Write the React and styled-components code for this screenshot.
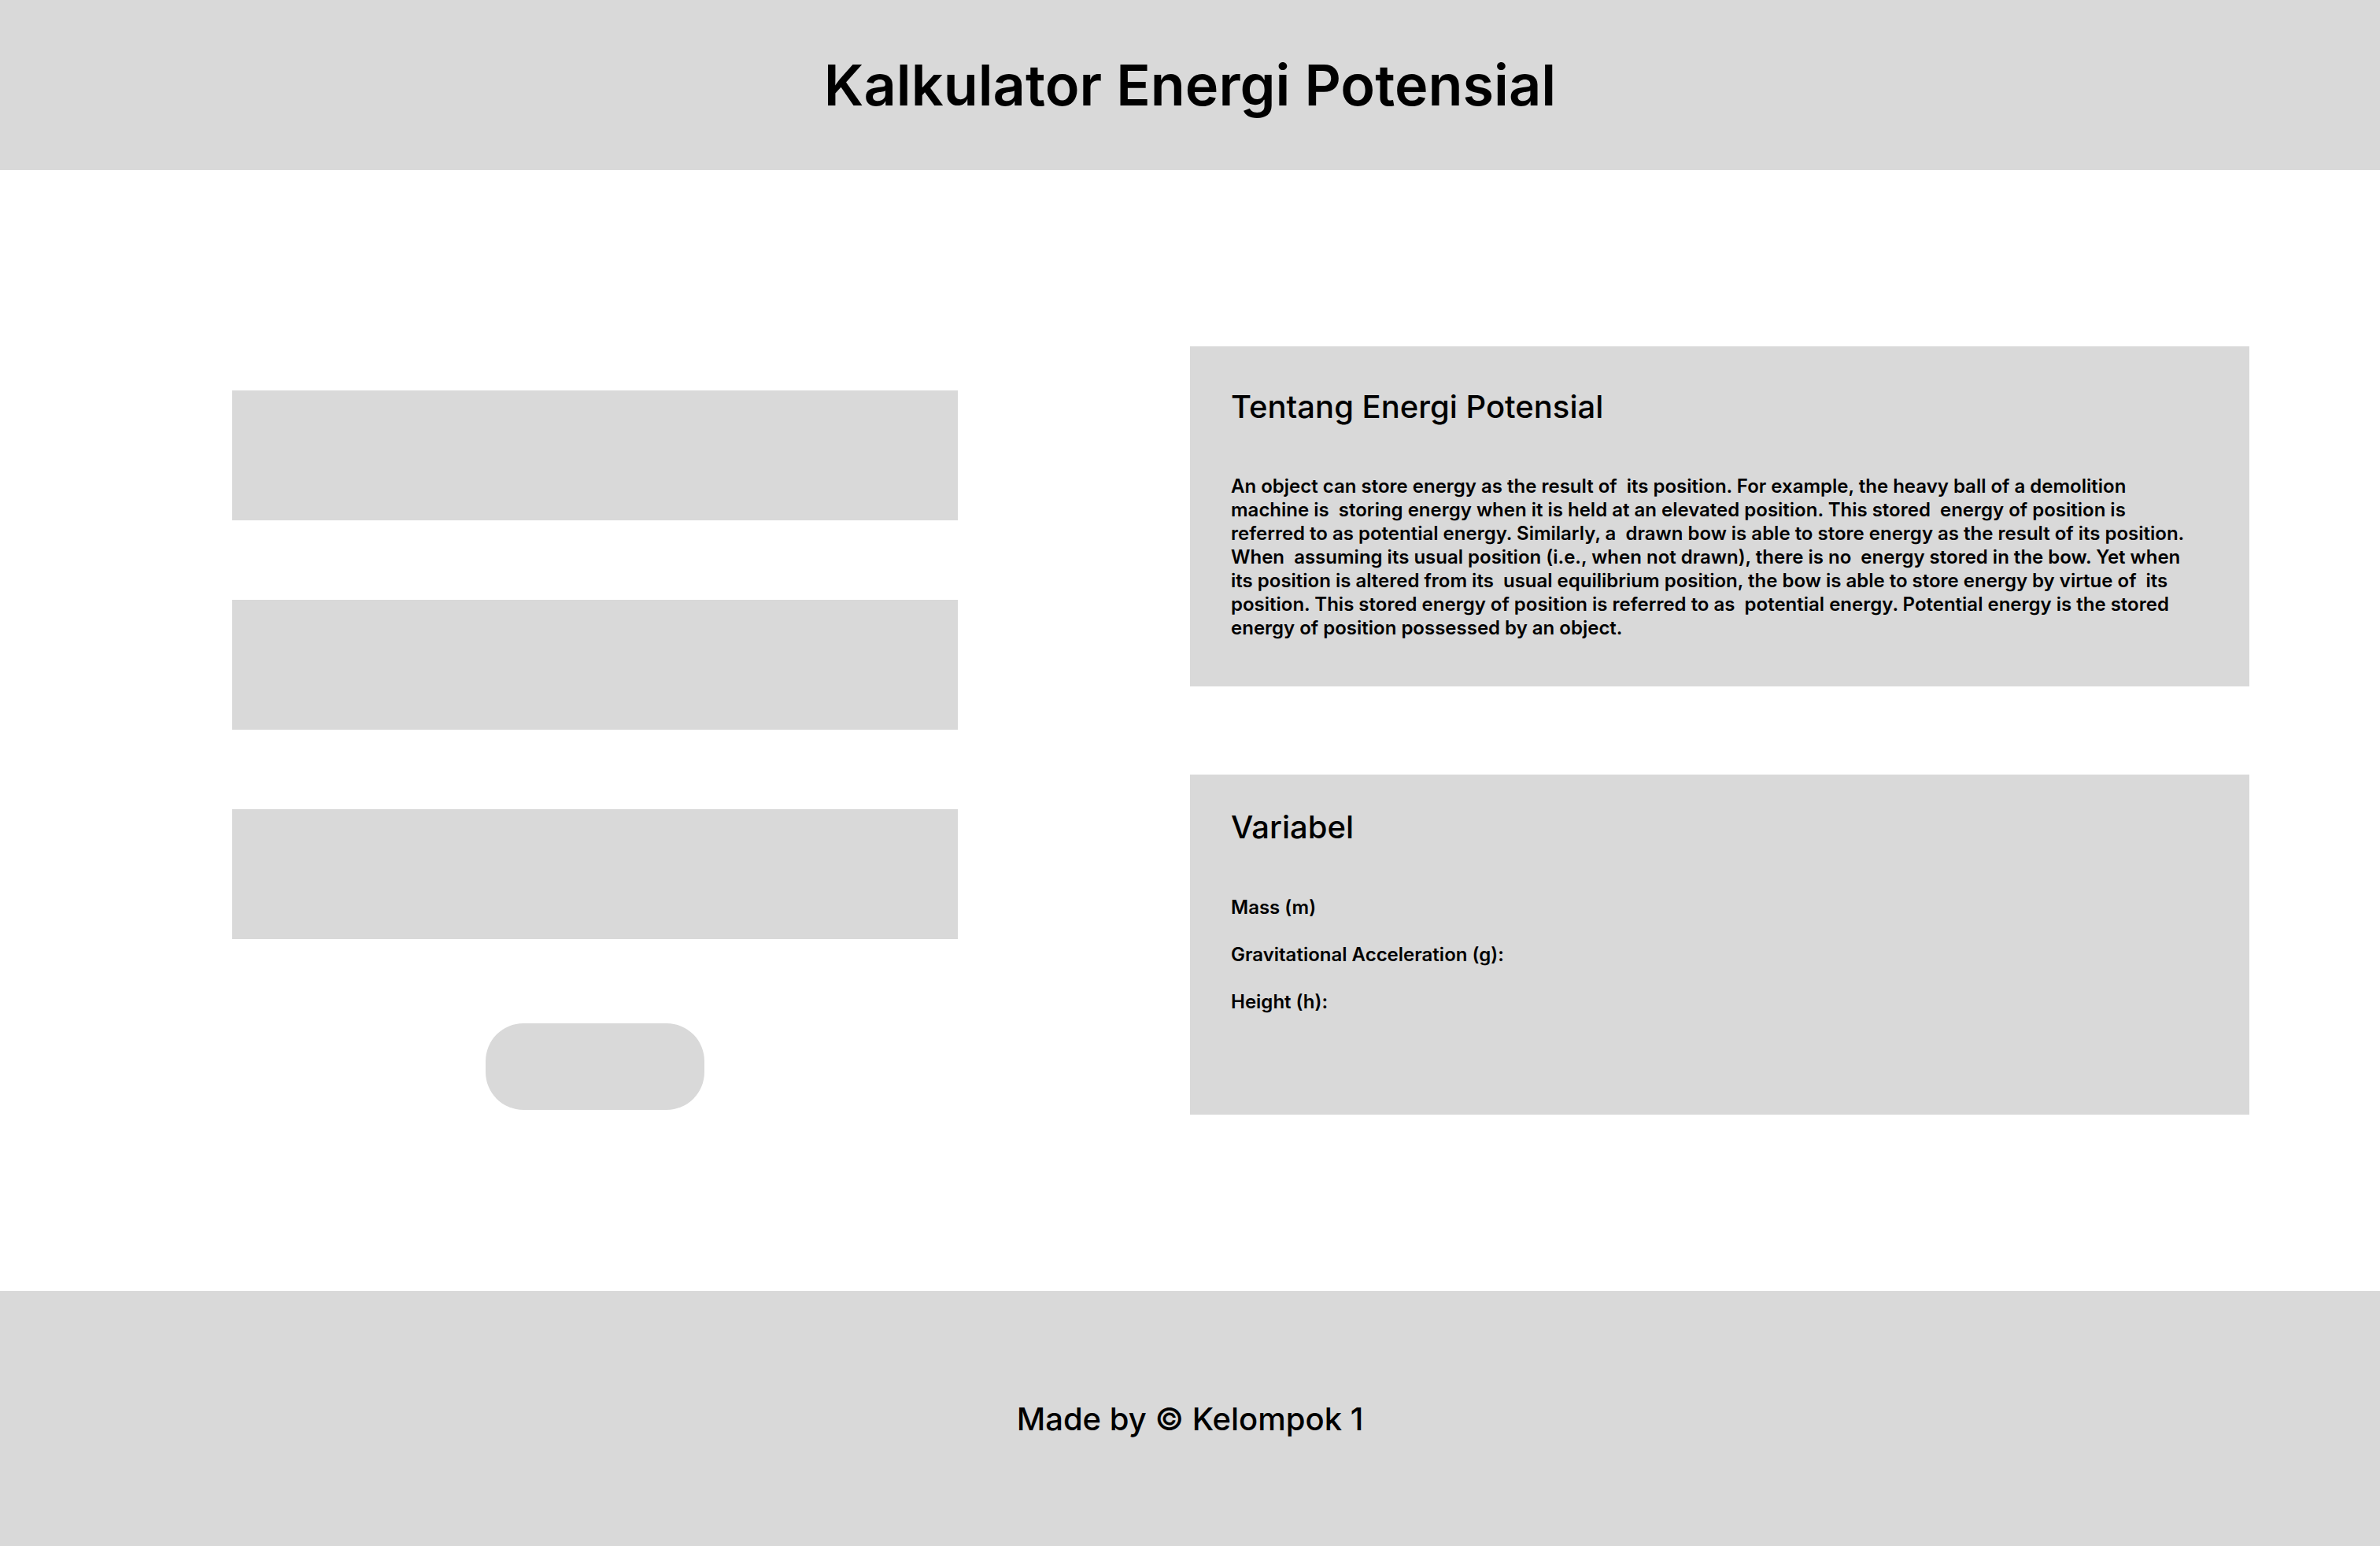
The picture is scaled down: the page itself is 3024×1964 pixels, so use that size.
import React from "react";
import styled, { createGlobalStyle } from "styled-components";

const GlobalStyle = createGlobalStyle`
  * {
    box-sizing: border-box;
  }

  body {
    margin: 0;
    background: #ffffff;
    color: #000000;
    font-family: Inter, "Noto Sans", sans-serif;
  }
`;

const Header = styled.header`
  height: 216px;
  background-color: #d9d9d9;
  display: flex;
  align-items: center;
  justify-content: center;

  h1 {
    margin: 0;
    font-size: 72px;
    font-weight: 600;
    line-height: 1.2;
  }
`;

const Main = styled.main`
  height: 1424px;
  display: grid;
  grid-template-columns: 1fr 1fr;
`;

const Form = styled.section`
  display: flex;
  flex-direction: column;
  align-items: center;
  gap: 101px;
  padding-top: 280px;
`;

const Field = styled.input`
  width: 922px;
  height: 165px;
  border: none;
  outline: none;
  background-color: #d9d9d9;
  font-family: inherit;
  font-size: 32px;
  padding: 0 32px;
`;

const Button = styled.button`
  width: 278px;
  height: 110px;
  margin-top: 6px;
  border: none;
  border-radius: 48px;
  background-color: #d9d9d9;
  cursor: pointer;
`;

const Aside = styled.section`
  display: flex;
  flex-direction: column;
  gap: 112px;
  padding-top: 224px;
`;

const Card = styled.article`
  width: 1346px;
  height: 432px;
  background-color: #d9d9d9;
  padding: ${({ $top }) => $top}px 52px 0;

  h2 {
    margin: 0;
    font-size: 40px;
    font-weight: 500;
    line-height: 48px;
  }
`;

const Paragraph = styled.p`
  margin: 62px 0 0;
  font-size: 24px;
  font-weight: 600;
  line-height: 30px;
  white-space: pre-wrap;
`;

const VarList = styled.ul`
  list-style: none;
  margin: 63px 0 0;
  padding: 0;
  display: flex;
  flex-direction: column;
  gap: 30px;

  li {
    font-size: 24px;
    font-weight: 600;
    line-height: 30px;
  }
`;

const Footer = styled.footer`
  height: 324px;
  background-color: #d9d9d9;
  display: flex;
  align-items: center;
  justify-content: center;

  p {
    margin: 0;
    font-size: 40px;
    font-weight: 500;
  }
`;

const about = [
  "An object can store energy as the result of  its position. For example, the heavy ball of a demolition",
  "machine is  storing energy when it is held at an elevated position. This stored  energy of position is",
  "referred to as potential energy. Similarly, a  drawn bow is able to store energy as the result of its position.",
  "When  assuming its usual position (i.e., when not drawn), there is no  energy stored in the bow. Yet when",
  "its position is altered from its  usual equilibrium position, the bow is able to store energy by virtue of  its",
  "position. This stored energy of position is referred to as  potential energy. Potential energy is the stored",
  "energy of position possessed by an object.",
].join("\n");

const variables = [
  "Mass (m)",
  "Gravitational Acceleration (g):",
  "Height (h):",
];

const App = () => {
  return (
    <>
      <GlobalStyle />
      <Header>
        <h1>Kalkulator Energi Potensial</h1>
      </Header>

      <Main>
        <Form>
          <Field type="number" aria-label="Mass" />
          <Field type="number" aria-label="Gravitational acceleration" />
          <Field type="number" aria-label="Height" />
          <Button type="button" aria-label="Hitung" />
        </Form>

        <Aside>
          <Card $top={53}>
            <h2>Tentang Energi Potensial</h2>
            <Paragraph>{about}</Paragraph>
          </Card>
          <Card $top={43}>
            <h2>Variabel</h2>
            <VarList>
              {variables.map((v) => (
                <li key={v}>{v}</li>
              ))}
            </VarList>
          </Card>
        </Aside>
      </Main>

      <Footer>
        <p>Made by © Kelompok 1</p>
      </Footer>
    </>
  );
};

export default App;
